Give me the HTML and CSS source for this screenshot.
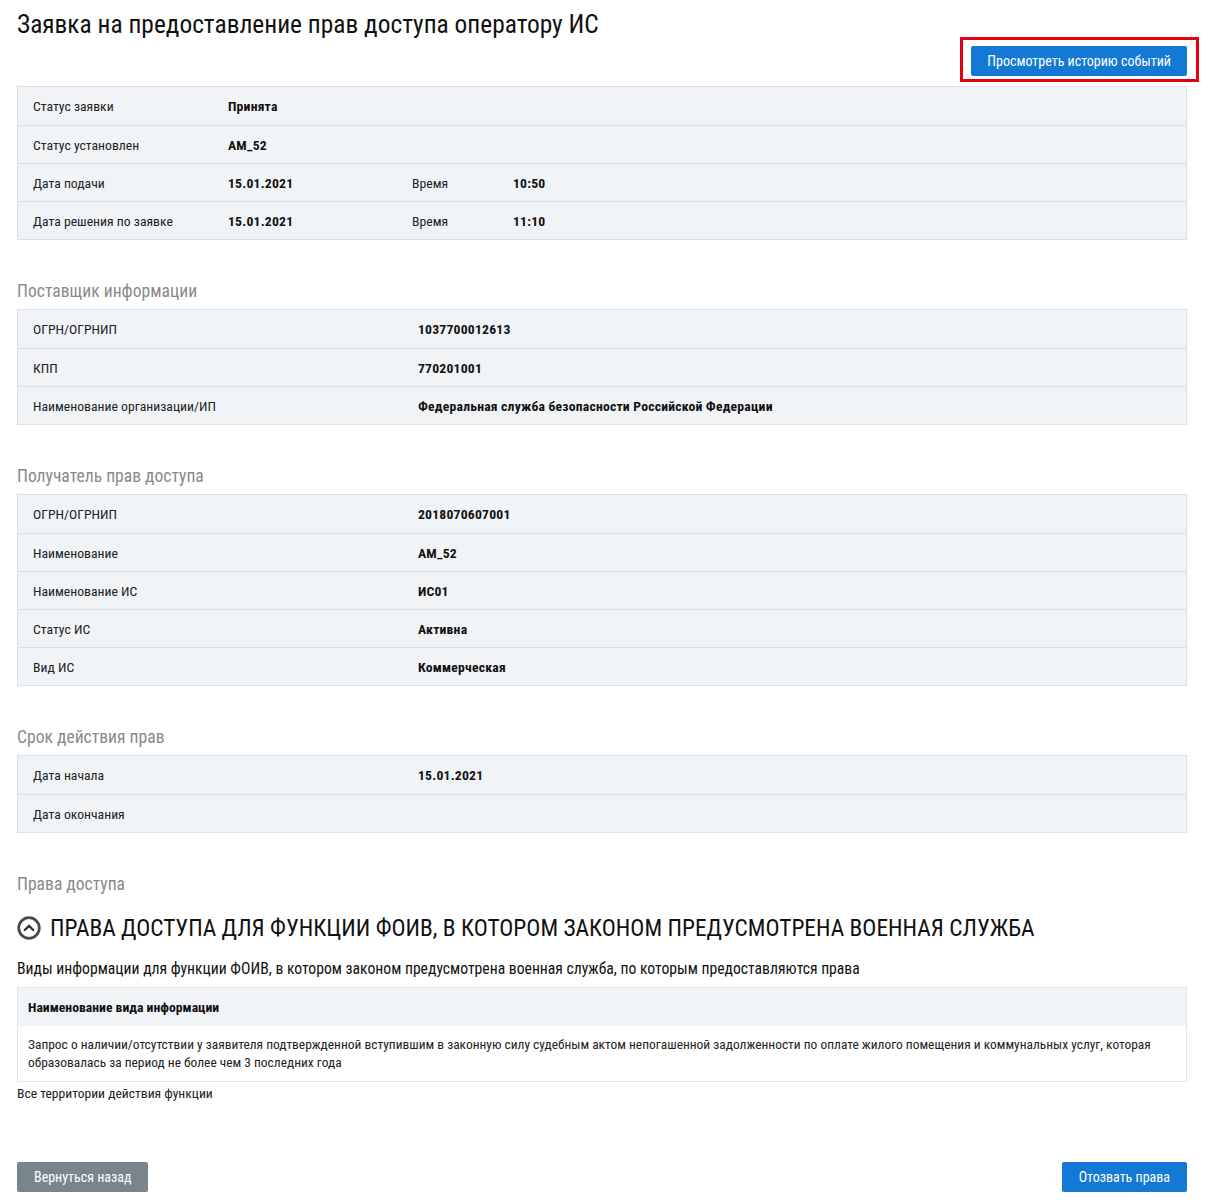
FILE: index.html
```html
<!DOCTYPE html>
<html lang="ru">
<head>
<meta charset="utf-8">
<title>Заявка на предоставление прав доступа оператору ИС</title>
<link rel="stylesheet" href="styles.css">
</head>
<body>
<div class="page">
  <h1 class="title">Заявка на предоставление прав доступа оператору ИС</h1>
  <div class="actions">
    <div class="btn-wrap">
      <button class="btn btn-blue btn-history">Просмотреть историю событий</button>
      <span class="highlight"></span>
    </div>
  </div>

  <div class="table t-status">
    <div class="row"><div class="lbl">Статус заявки</div><div class="val">Принята</div></div>
    <div class="row"><div class="lbl">Статус установлен</div><div class="val">АМ_52</div></div>
    <div class="row"><div class="lbl">Дата подачи</div><div class="val">15.01.2021</div><div class="lbl">Время</div><div class="val">10:50</div></div>
    <div class="row"><div class="lbl">Дата решения по заявке</div><div class="val">15.01.2021</div><div class="lbl">Время</div><div class="val">11:10</div></div>
  </div>

  <h2 class="section-title">Поставщик информации</h2>
  <div class="table t-wide">
    <div class="row"><div class="lbl">ОГРН/ОГРНИП</div><div class="val">1037700012613</div></div>
    <div class="row"><div class="lbl">КПП</div><div class="val">770201001</div></div>
    <div class="row"><div class="lbl">Наименование организации/ИП</div><div class="val">Федеральная служба безопасности Российской Федерации</div></div>
  </div>

  <h2 class="section-title">Получатель прав доступа</h2>
  <div class="table t-wide">
    <div class="row"><div class="lbl">ОГРН/ОГРНИП</div><div class="val">2018070607001</div></div>
    <div class="row"><div class="lbl">Наименование</div><div class="val">АМ_52</div></div>
    <div class="row"><div class="lbl">Наименование ИС</div><div class="val">ИС01</div></div>
    <div class="row"><div class="lbl">Статус ИС</div><div class="val">Активна</div></div>
    <div class="row"><div class="lbl">Вид ИС</div><div class="val">Коммерческая</div></div>
  </div>

  <h2 class="section-title">Срок действия прав</h2>
  <div class="table t-wide">
    <div class="row"><div class="lbl">Дата начала</div><div class="val">15.01.2021</div></div>
    <div class="row"><div class="lbl">Дата окончания</div><div class="val"></div></div>
  </div>

  <h2 class="section-title">Права доступа</h2>
  <div class="func-head">
    <svg class="toggle" width="24" height="24" viewBox="0 0 24 24" aria-hidden="true">
      <circle cx="12" cy="12" r="10.3" fill="none" stroke="#4a4a4a" stroke-width="2.7"/>
      <path d="M7.8 14 L12 9.8 L16.2 14" fill="none" stroke="#333" stroke-width="2.4" stroke-linecap="round" stroke-linejoin="round"/>
    </svg>
    <span>ПРАВА ДОСТУПА ДЛЯ ФУНКЦИИ ФОИВ, В КОТОРОМ ЗАКОНОМ ПРЕДУСМОТРЕНА ВОЕННАЯ СЛУЖБА</span>
  </div>
  <div class="func-sub">Виды информации для функции ФОИВ, в котором законом предусмотрена военная служба, по которым предоставляются права</div>

  <div class="info-table">
    <div class="info-head">Наименование вида информации</div>
    <div class="info-body">Запрос о наличии/отсутствии у заявителя подтвержденной вступившим в законную силу судебным актом непогашенной задолженности по оплате жилого помещения и коммунальных услуг, которая образовалась за период не более чем 3 последних года</div>
  </div>
  <div class="territory">Все территории действия функции</div>

  <div class="footer">
    <button class="btn btn-gray">Вернуться назад</button>
    <button class="btn btn-blue">Отозвать права</button>
  </div>
</div>
</body>
</html>
```
FILE: styles.css
```css
* { box-sizing: border-box; }
html, body { margin: 0; padding: 0; background: #fff; }
body {
  font-family: "Roboto Condensed", Roboto, "Liberation Sans", sans-serif;
  color: #1a1a1a;
  font-size: 13.7px;
}
.page {
  width: 1170px;
  margin-left: 17px;
  padding-top: 9px;
  padding-bottom: 8px;
}
.title {
  margin: 0;
  font-size: 25.4px;
  line-height: 30px;
  font-weight: 400;
  color: #111;
}
.actions {
  display: flex;
  justify-content: flex-end;
  margin-top: 7px;
}
.btn-wrap { position: relative; }
.highlight {
  position: absolute;
  top: -9px;
  bottom: -6px;
  left: -11px;
  right: -12px;
  border: 3px solid #e3000f;
  pointer-events: none;
}
.btn {
  font-family: "Roboto Condensed", Roboto, sans-serif;
  font-size: 14px;
  font-weight: 400;
  height: 30px;
  border: none;
  border-radius: 2px;
  color: #fff;
  padding: 0 17px;
  cursor: pointer;
}
.btn-history { padding: 0 16px; }
.btn-blue { background: #1479d4; }
.btn-gray { background: #78858f; }
.table {
  margin-top: 10px;
  border: 1px solid #dce0e5;
  background: #f1f4f7;
}
.row {
  display: grid;
  height: 38px;
  align-items: center;
  border-top: 1px solid #dce0e5;
  padding-left: 15px;
}
.row:first-child { border-top: none; }
.t-status .row { grid-template-columns: 195px 184px 101px 1fr; }
.t-wide .row { grid-template-columns: 385px 1fr; }
.lbl { color: #222; }
.val { font-weight: 700; color: #111; letter-spacing: 0.2px; }
.section-title {
  margin: 39px 0 0;
  font-size: 17.6px;
  line-height: 24px;
  font-weight: 400;
  color: #8a8a8a;
}
.section-title + .table { margin-top: 6px; }
.func-head {
  display: flex;
  align-items: center;
  gap: 9px;
  margin-top: 17px;
  font-size: 23.4px;
  line-height: 30px;
  color: #111;
}
.toggle { flex: none; }
.func-sub {
  margin-top: 16px;
  font-size: 15.7px;
  line-height: 20px;
  color: #111;
}
.info-table {
  margin-top: 8px;
  border: 1px solid #e4e7eb;
}
.info-head {
  height: 38px;
  display: flex;
  align-items: center;
  padding-left: 10px;
  background: #f1f4f7;
  font-weight: 700;
  font-size: 13.7px;
  color: #111;
}
.info-body {
  padding: 10px 20px 9px 10px;
  font-size: 13.45px;
  line-height: 18px;
  color: #222;
}
.territory {
  margin-top: 3px;
  font-size: 13.6px;
  line-height: 16px;
  color: #222;
}
.footer {
  display: flex;
  justify-content: space-between;
  margin-top: 61px;
}
```
